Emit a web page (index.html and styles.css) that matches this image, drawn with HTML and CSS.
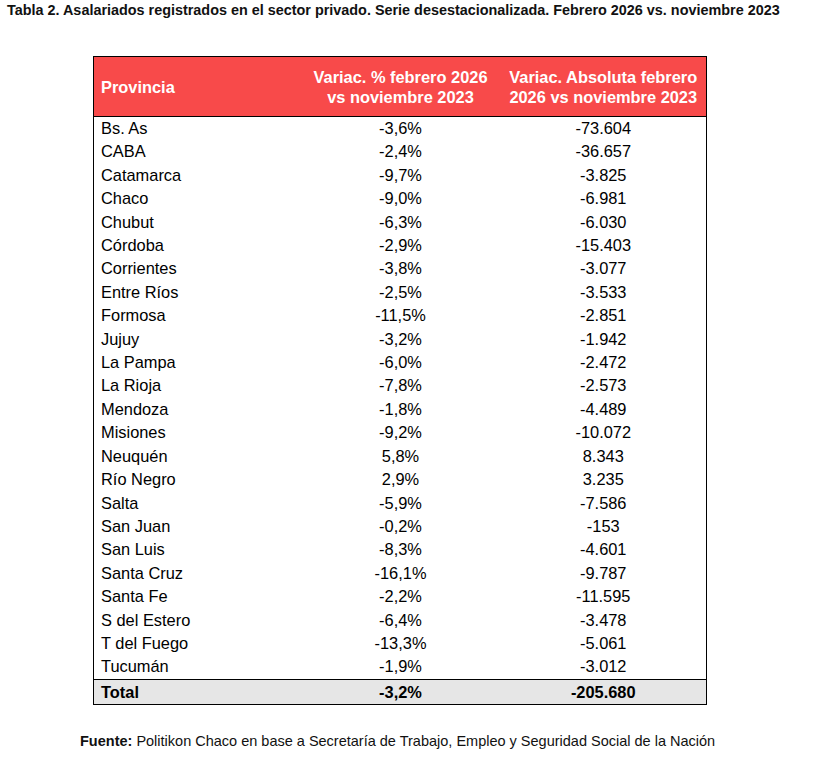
FILE: index.html
```html
<!DOCTYPE html>
<html lang="es">
<head>
<meta charset="utf-8">
<link rel="stylesheet" href="styles.css">
</head>
<body>
<h1 class="title">Tabla 2. Asalariados registrados en el sector privado. Serie desestacionalizada. Febrero 2026 vs. noviembre 2023</h1>
<div class="wrap">
<table class="data">
<colgroup><col class="c1"><col class="c2"><col class="c3"></colgroup>
<thead>
<tr><th class="prov">Provincia</th><th>Variac. % febrero 2026<br>vs noviembre 2023</th><th>Variac. Absoluta febrero<br>2026 vs noviembre 2023</th></tr>
</thead>
<tbody>
<tr><td>Bs. As</td><td>-3,6%</td><td>-73.604</td></tr>
<tr><td>CABA</td><td>-2,4%</td><td>-36.657</td></tr>
<tr><td>Catamarca</td><td>-9,7%</td><td>-3.825</td></tr>
<tr><td>Chaco</td><td>-9,0%</td><td>-6.981</td></tr>
<tr><td>Chubut</td><td>-6,3%</td><td>-6.030</td></tr>
<tr><td>Córdoba</td><td>-2,9%</td><td>-15.403</td></tr>
<tr><td>Corrientes</td><td>-3,8%</td><td>-3.077</td></tr>
<tr><td>Entre Ríos</td><td>-2,5%</td><td>-3.533</td></tr>
<tr><td>Formosa</td><td>-11,5%</td><td>-2.851</td></tr>
<tr><td>Jujuy</td><td>-3,2%</td><td>-1.942</td></tr>
<tr><td>La Pampa</td><td>-6,0%</td><td>-2.472</td></tr>
<tr><td>La Rioja</td><td>-7,8%</td><td>-2.573</td></tr>
<tr><td>Mendoza</td><td>-1,8%</td><td>-4.489</td></tr>
<tr><td>Misiones</td><td>-9,2%</td><td>-10.072</td></tr>
<tr><td>Neuquén</td><td>5,8%</td><td>8.343</td></tr>
<tr><td>Río Negro</td><td>2,9%</td><td>3.235</td></tr>
<tr><td>Salta</td><td>-5,9%</td><td>-7.586</td></tr>
<tr><td>San Juan</td><td>-0,2%</td><td>-153</td></tr>
<tr><td>San Luis</td><td>-8,3%</td><td>-4.601</td></tr>
<tr><td>Santa Cruz</td><td>-16,1%</td><td>-9.787</td></tr>
<tr><td>Santa Fe</td><td>-2,2%</td><td>-11.595</td></tr>
<tr><td>S del Estero</td><td>-6,4%</td><td>-3.478</td></tr>
<tr><td>T del Fuego</td><td>-13,3%</td><td>-5.061</td></tr>
<tr><td>Tucumán</td><td>-1,9%</td><td>-3.012</td></tr>
</tbody>
<tfoot>
<tr><td>Total</td><td>-3,2%</td><td>-205.680</td></tr>
</tfoot>
</table>
</div>
<p class="source"><b>Fuente:</b> Politikon Chaco en base a Secretaría de Trabajo, Empleo y Seguridad Social de la Nación</p>
</body>
</html>
```
FILE: styles.css
```css
html, body {
  margin: 0;
  padding: 0;
  background: #fff;
}
body {
  font-family: "Liberation Sans", Arial, sans-serif;
  color: #000;
}
.title {
  margin: 0;
  padding: 2px 0 0 7px;
  font-size: 14.4px;
  line-height: 17px;
  font-weight: bold;
  color: #111;
  white-space: nowrap;
}
.wrap {
  padding: 37px 0 0 93px;
}
.data {
  border-collapse: collapse;
  border: 1px solid #000;
  width: 613px;
  table-layout: fixed;
  font-size: 16.4px;
}
.c1 { width: 207px; }
.c2 { width: 200px; }
.c3 { width: 206px; }
.data thead th {
  background: #f84a4a;
  color: #fff;
  font-weight: bold;
  height: 59px;
  line-height: 20px;
  text-align: center;
  padding: 0;
  border-bottom: 1px solid #000;
  vertical-align: middle;
  white-space: nowrap;
}
.data thead th.prov {
  text-align: left;
  padding-left: 7px;
}
.data td {
  padding: 0;
  height: 23.4px;
  line-height: 23.4px;
  text-align: center;
  white-space: nowrap;
}
.data td:first-child {
  text-align: left;
  padding-left: 7px;
}
.data tfoot td {
  background: #e6e6e6;
  font-weight: bold;
  border-top: 1px solid #000;
  height: 24px;
  line-height: 24px;
}
.source {
  margin: 28px 0 0 80px;
  font-size: 14.5px;
  line-height: 17px;
  color: #111;
  white-space: nowrap;
}
```
